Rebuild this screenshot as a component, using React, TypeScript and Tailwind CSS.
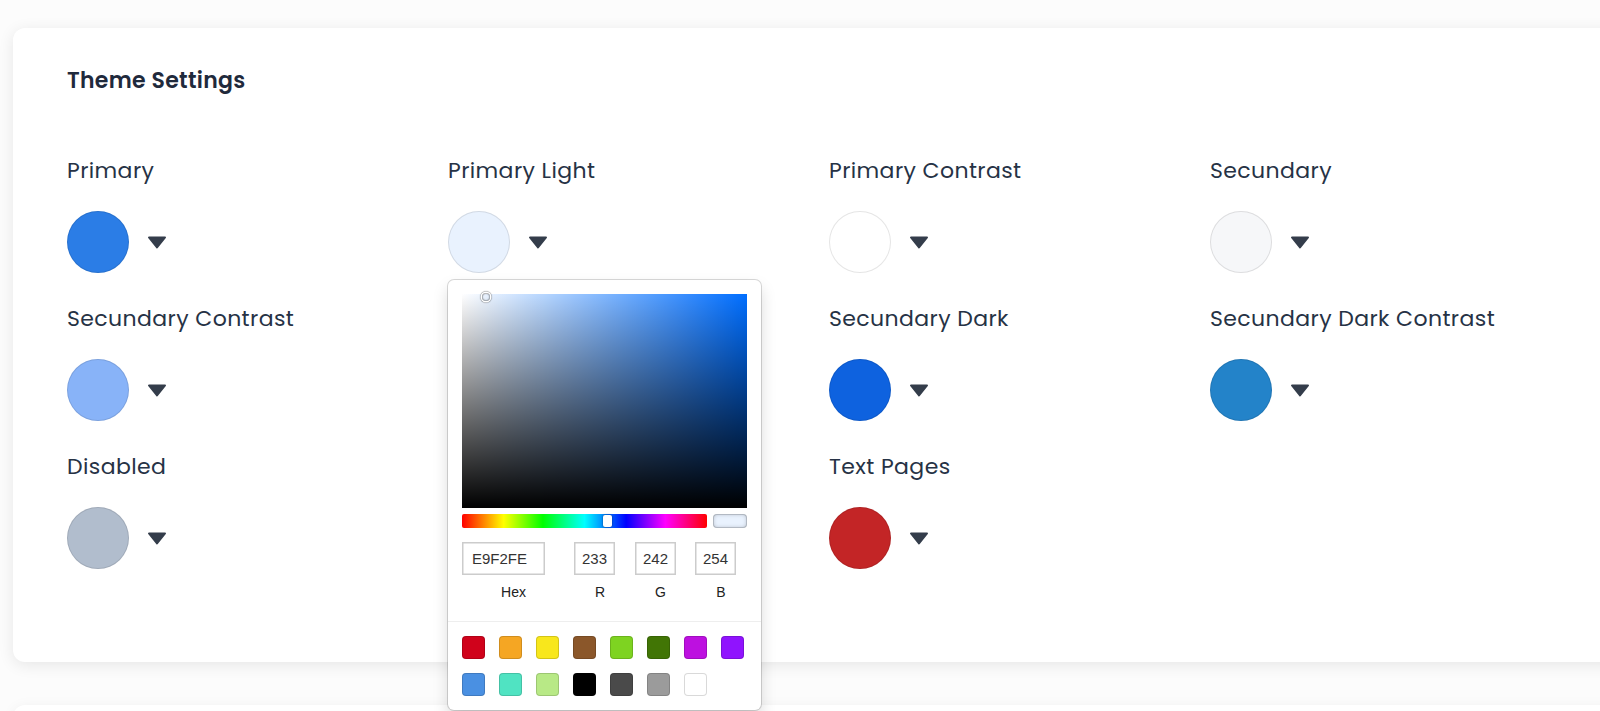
import React from "react";

const uiFont = { fontFamily: "Poppins, Inter, 'Noto Sans', sans-serif" };

interface ColorItemProps {
  label: string;
  swatch: string;
  children?: React.ReactNode;
}

function Caret() {
  return (
    <svg width="20" height="13" viewBox="0 0 20 13" className="shrink-0">
      <path
        d="M2 1.5 H18 L10 11.5 Z"
        fill="#343d4b"
        stroke="#343d4b"
        strokeWidth="2"
        strokeLinejoin="round"
      />
    </svg>
  );
}

function ColorItem({ label, swatch, children }: ColorItemProps) {
  return (
    <div className="relative">
      <div className="h-[28px] text-[22px] leading-[28px] tracking-[0.4px] text-[#263245] whitespace-nowrap">
        {label}
      </div>
      <div className="mt-[26px] flex items-center gap-[18px]">
        <div className={`w-[62px] h-[62px] rounded-full border border-black/10 ${swatch}`} />
        <Caret />
      </div>
      {children}
    </div>
  );
}

const presets = [
  "bg-[#d0021b]",
  "bg-[#f5a623]",
  "bg-[#f8e71c]",
  "bg-[#8b572a]",
  "bg-[#7ed321]",
  "bg-[#417505]",
  "bg-[#bd10e0]",
  "bg-[#9013fe]",
  "bg-[#4a90e2]",
  "bg-[#50e3c2]",
  "bg-[#b8e986]",
  "bg-[#000000]",
  "bg-[#4a4a4a]",
  "bg-[#9b9b9b]",
  "bg-[#ffffff]",
];

function ColorPicker() {
  const fields = [
    { label: "Hex", value: "E9F2FE", width: "w-[83px]", ml: "ml-0", pl: "pl-[20px]", text: "text-left pl-[10px]" },
    { label: "R", value: "233", width: "w-[41px]", ml: "ml-[29px]", pl: "pl-[11px]", text: "text-center" },
    { label: "G", value: "242", width: "w-[41px]", ml: "ml-[20px]", pl: "pl-[10px]", text: "text-center" },
    { label: "B", value: "254", width: "w-[41px]", ml: "ml-[19px]", pl: "pl-[11px]", text: "text-center" },
  ];
  return (
    <div
      className="absolute left-0 top-[calc(100%+7px)] z-10 w-[313px] h-[430px] bg-white rounded-[6px] shadow-[0_0_0_1px_rgba(0,0,0,0.15),0_8px_16px_rgba(0,0,0,0.15)]"
      style={{ fontFamily: "'Liberation Sans', Arial, sans-serif" }}
    >
      <div className="pl-[14px] pr-[14px] pt-[14px]">
        {/* saturation */}
        <div className="relative h-[214px] w-[285px] bg-[#006eff] bg-[linear-gradient(to_top,#000,transparent),linear-gradient(to_right,#fff,rgba(255,255,255,0))]">
          <div className="absolute left-[24px] top-[3px] w-[8px] h-[8px] -translate-x-1/2 -translate-y-1/2 rounded-full shadow-[0_0_0_1.5px_#fff,inset_0_0_1px_1px_rgba(0,0,0,0.3),0_0_1px_2px_rgba(0,0,0,0.4)]" />
        </div>
        {/* hue + preview */}
        <div className="mt-[6px] flex gap-[6px]">
          <div className="relative h-[14px] w-[245px] rounded-[2px] bg-[linear-gradient(to_right,#f00_0%,#ff0_17%,#0f0_33%,#0ff_50%,#00f_67%,#f0f_83%,#f00_100%)]">
            <div className="absolute left-[141px] top-[1px] h-[12px] w-[9px] rounded-[2px] bg-white shadow-[0_0_2px_rgba(0,0,0,0.6)]" />
          </div>
          <div className="h-[14px] w-[34px] rounded-[4px] bg-[#e9f2fe] shadow-[inset_0_0_0_1px_rgba(0,0,0,0.15),inset_0_0_4px_rgba(0,0,0,0.25)]" />
        </div>
        {/* inputs */}
        <div className="mt-[14px] flex">
          {fields.map((f) => (
            <div key={f.label} className={`${f.width} ${f.ml} flex flex-col`}>
              <div
                className={`h-[33px] leading-[33px] text-[15px] text-[#333] shadow-[inset_0_0_0_1.5px_#cccccc] ${f.text}`}
              >
                {f.value}
              </div>
              <div className={`mt-[8px] h-[18px] leading-[18px] text-[14px] text-[#222] text-center ${f.pl}`}>
                {f.label}
              </div>
            </div>
          ))}
        </div>
      </div>
      {/* presets */}
      <div className="mt-[20px] border-t border-[#eeeeee] pl-[14px] pr-[14px] pt-[14px] pb-[14px]">
        <div className="grid grid-cols-[repeat(8,23px)] gap-x-[14px] gap-y-[14px]">
          {presets.map((c, i) => (
            <div
              key={i}
              className={`h-[23px] w-[23px] rounded-[4px] shadow-[inset_0_0_0_1px_rgba(0,0,0,0.15)] ${c}`}
            />
          ))}
        </div>
      </div>
    </div>
  );
}

export default function App() {
  return (
    <div className="relative h-[711px] w-[1600px] overflow-hidden bg-[#fcfcfc]" style={uiFont}>
      <div className="flex flex-col pl-[13px]">
        <div className="mt-[-52px] h-[40px] w-[1640px] rounded-[12px] bg-white shadow-[0_2px_14px_rgba(0,0,0,0.06)]" />
        <div className="mt-[40px] h-[634px] w-[1640px] rounded-[12px] bg-white pl-[54px] pt-[39px] shadow-[0_3px_16px_rgba(0,0,0,0.09)]">
          <h2 className="h-[28px] text-[22px] font-semibold leading-[28px] tracking-[0.3px] text-[#1f2a3c]">
            Theme Settings
          </h2>
          <div className="mt-[62px] grid grid-cols-[repeat(4,381px)] gap-y-[32px]">
            <ColorItem label="Primary" swatch="bg-[#2b7de6]" />
            <ColorItem label="Primary Light" swatch="bg-[#e9f2fe]">
              <ColorPicker />
            </ColorItem>
            <ColorItem label="Primary Contrast" swatch="bg-white" />
            <ColorItem label="Secundary" swatch="bg-[#f6f7f9]" />
            <ColorItem label="Secundary Contrast" swatch="bg-[#88b3f8]" />
            <ColorItem label="Secundary Light" swatch="bg-[#e9f2fe]" />
            <ColorItem label="Secundary Dark" swatch="bg-[#0e62df]" />
            <ColorItem label="Secundary Dark Contrast" swatch="bg-[#2383c9]" />
            <ColorItem label="Disabled" swatch="bg-[#b1bdcd]" />
            <ColorItem label="Text" swatch="bg-[#263245]" />
            <ColorItem label="Text Pages" swatch="bg-[#c32526]" />
          </div>
        </div>
        <div className="mt-[43px] h-[200px] w-[1640px] rounded-[12px] bg-white shadow-[0_2px_14px_rgba(0,0,0,0.06)]" />
      </div>
    </div>
  );
}
